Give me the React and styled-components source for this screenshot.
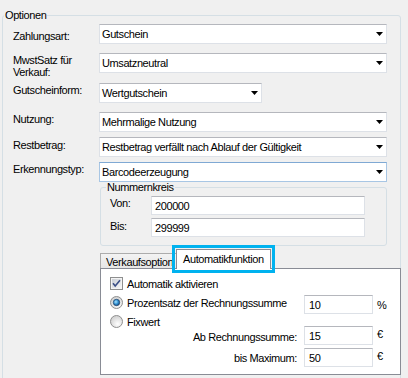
import React from "react";
import styled, { createGlobalStyle } from "styled-components";

const GlobalStyle = createGlobalStyle`
  body {
    margin: 0;
    background: #f0f0f0;
    font-family: "Liberation Sans", Arial, sans-serif;
    font-size: 11px;
    letter-spacing: -0.4px;
    color: #000;
  }
`;

const Page = styled.div`
  width: 408px;
  height: 378px;
  overflow: hidden;
  box-sizing: border-box;
  padding: 9px 0 0 2px;
`;

const Group = styled.fieldset`
  margin: 0 0 0 ${({ $ml }) => $ml || 0}px;
  padding: ${({ $pad }) => $pad};
  width: ${({ $w }) => $w}px;
  height: ${({ $h }) => $h}px;
  box-sizing: border-box;
  min-width: 0;
  border: 1px solid #d5dfe5;
  border-radius: 3px;
`;

const Legend = styled.legend`
  margin-left: ${({ $indent }) => $indent}px;
  padding: 0 1px;
  line-height: ${({ $lh }) => $lh}px;
`;

const Form = styled.div`
  padding-left: 10px;
`;

const Row = styled.div`
  display: grid;
  grid-template-columns: 86px auto;
  align-items: start;
  height: ${({ $h }) => $h}px;
`;

const Label = styled.div`
  line-height: 12px;
  padding-top: ${({ $top }) => $top || 1}px;
`;

const Combo = styled.div`
  width: ${({ $w }) => $w}px;
  height: 20px;
  box-sizing: border-box;
  display: flex;
  align-items: center;
  justify-content: space-between;
  padding: 0 3px 0 2px;
  background: #fff;
  border: 1px solid ${({ $focus }) => ($focus ? "#a8c6e4" : "#dde1e7")};
  border-top-color: ${({ $focus }) => ($focus ? "#7fa9d4" : "#b5b7bd")};
  white-space: nowrap;
`;

const Arrow = () => (
  <svg width="7" height="4" viewBox="0 0 7 4">
    <path d="M0 0H7L3.5 4Z" fill="#000" />
  </svg>
);

const Select = ({ value, w = 288, focus }) => (
  <Combo $w={w} $focus={focus}>
    <span>{value}</span>
    <Arrow />
  </Combo>
);

const Column = styled.div`
  grid-column: 2;
  padding-left: 1px;
`;

const RangeGrid = styled.div`
  display: grid;
  grid-template-columns: 41px 214px;
  grid-auto-rows: 22px;
  padding: 3px 0 0 9px;
`;

const TextBox = styled.div`
  width: ${({ $w }) => $w}px;
  height: 19px;
  box-sizing: border-box;
  display: flex;
  align-items: center;
  padding-left: ${({ $pl }) => $pl || 3}px;
  background: #fff;
  border: 1px solid #dde1e7;
  border-top-color: #b5b7bd;
`;

const TabStrip = styled.div`
  display: flex;
  align-items: flex-end;
  height: 19px;
  margin-top: 3px;
`;

const Tab = styled.div`
  position: relative;
  box-sizing: border-box;
  width: ${({ $active }) => ($active ? 95 : 78)}px;
  height: ${({ $active }) => ($active ? 20 : 15)}px;
  margin: ${({ $active }) => ($active ? "0 0 -1px -2px" : "0")};
  padding: ${({ $active }) => ($active ? "3px 0 0 6px" : "2px 0 0 5px")};
  line-height: 12px;
  white-space: nowrap;
  overflow: hidden;
  border: 1px solid ${({ $active }) => ($active ? "#898c95" : "#acacac")};
  border-bottom: none;
  background: ${({ $active }) =>
    $active ? "#fff" : "linear-gradient(#f3f3f3, #e6e6e6)"};
  z-index: ${({ $active }) => ($active ? 1 : 0)};
  outline: ${({ $active }) => ($active ? "3px solid #00b2ef" : "none")};
  outline-offset: 1px;
`;

const Panel = styled.div`
  width: 301px;
  height: 107px;
  box-sizing: border-box;
  background: #fff;
  border: 1px solid #898c95;
  padding: 8px 0 0 9px;
  display: grid;
  grid-template-columns: 194px 69px auto;
  grid-template-rows: 18px 19px 12px 22px 19px;
`;

const Option = styled.div`
  grid-column: ${({ $span }) => ($span ? "1 / -1" : "1")};
  display: flex;
  align-items: center;
  gap: 4px;
  height: 13px;
  align-self: start;
  margin-top: ${({ $mt }) => $mt || 0}px;
  white-space: nowrap;
`;

const FieldLabel = styled.div`
  grid-column: 1;
  text-align: right;
  padding-right: 7px;
  align-self: center;
`;

const Unit = styled.div`
  padding: ${({ $top }) => $top}px 0 0 4px;
  line-height: 12px;
`;

const CheckBox = () => (
  <svg width="13" height="13" viewBox="0 0 13 13">
    <defs>
      <linearGradient id="cbfill" x1="0" y1="0" x2="1" y2="1">
        <stop offset="0" stopColor="#cbcfd5" />
        <stop offset="1" stopColor="#f6f6f6" />
      </linearGradient>
    </defs>
    <rect x="0.5" y="0.5" width="12" height="12" fill="#f4f4f4" stroke="#8e8f8f" />
    <rect x="2" y="2" width="9" height="9" fill="url(#cbfill)" />
    <path d="M3 6.2L5.2 9L10 3.2" fill="none" stroke="#3b4f86" strokeWidth="1.6" />
  </svg>
);

const Radio = ({ checked }) => (
  <svg width="13" height="13" viewBox="0 0 13 13">
    <defs>
      <radialGradient id="rbfill" cx="0.6" cy="0.7" r="0.7">
        <stop offset="0" stopColor="#ffffff" />
        <stop offset="1" stopColor="#cfcfcf" />
      </radialGradient>
      <radialGradient id="rbdot" cx="0.4" cy="0.4" r="0.6">
        <stop offset="0" stopColor="#a8e3ff" />
        <stop offset="0.6" stopColor="#2e8fd0" />
        <stop offset="1" stopColor="#1a4f86" />
      </radialGradient>
    </defs>
    <circle cx="6.5" cy="6.5" r="6" fill="url(#rbfill)" stroke="#909090" />
    {checked && <circle cx="6.5" cy="6.5" r="3.2" fill="url(#rbdot)" stroke="#27496f" strokeWidth="0.8" />}
  </svg>
);

export default function App() {
  return (
    <Page>
      <GlobalStyle />
      <Group $w={399} $h={380} $pad="2px 0 0 0">
        <Legend $indent={1} $lh={13}>Optionen</Legend>
        <Form>
          <Row $h={29}>
            <Label $top={6}>Zahlungsart:</Label>
            <Select value="Gutschein" />
          </Row>
          <Row $h={30}>
            <Label>MwstSatz für<br />Verkauf:</Label>
            <Select value="Umsatzneutral" />
          </Row>
          <Row $h={29}>
            <Label>Gutscheinform:</Label>
            <Select value="Wertgutschein" w={163} />
          </Row>
          <Row $h={25}>
            <Label>Nutzung:</Label>
            <Select value="Mehrmalige Nutzung" />
          </Row>
          <Row $h={25}>
            <Label $top={2}>Restbetrag:</Label>
            <Select value="Restbetrag verfällt nach Ablauf der Gültigkeit" />
          </Row>
          <Row $h={19}>
            <Label>Erkennungstyp:</Label>
            <Select value="Barcodeerzeugung" focus />
          </Row>
          <Row>
            <Column>
              <Group $w={287} $h={65} $pad="0">
                <Legend $indent={5} $lh={12}>Nummernkreis</Legend>
                <RangeGrid>
                  <Label>Von:</Label>
                  <TextBox $w={214}>200000</TextBox>
                  <Label $top={2}>Bis:</Label>
                  <TextBox $w={214}>299999</TextBox>
                </RangeGrid>
              </Group>
              <TabStrip>
                <Tab>Verkaufsoption</Tab>
                <Tab $active>Automatikfunktion</Tab>
              </TabStrip>
              <Panel>
                <Option $span>
                  <CheckBox />
                  <span>Automatik aktivieren</span>
                </Option>
                <Option $mt={1}>
                  <Radio checked />
                  <span>Prozentsatz der Rechnungssumme</span>
                </Option>
                <TextBox $w={69} $pl={4}>10</TextBox>
                <Unit $top={4}>%</Unit>
                <Option $span $mt={1}>
                  <Radio />
                  <span>Fixwert</span>
                </Option>
                <FieldLabel>Ab Rechnungssumme:</FieldLabel>
                <TextBox $w={69} $pl={4}>15</TextBox>
                <Unit $top={2}>€</Unit>
                <FieldLabel>bis Maximum:</FieldLabel>
                <TextBox $w={69} $pl={4}>50</TextBox>
                <Unit $top={2}>€</Unit>
              </Panel>
            </Column>
          </Row>
        </Form>
      </Group>
    </Page>
  );
}
